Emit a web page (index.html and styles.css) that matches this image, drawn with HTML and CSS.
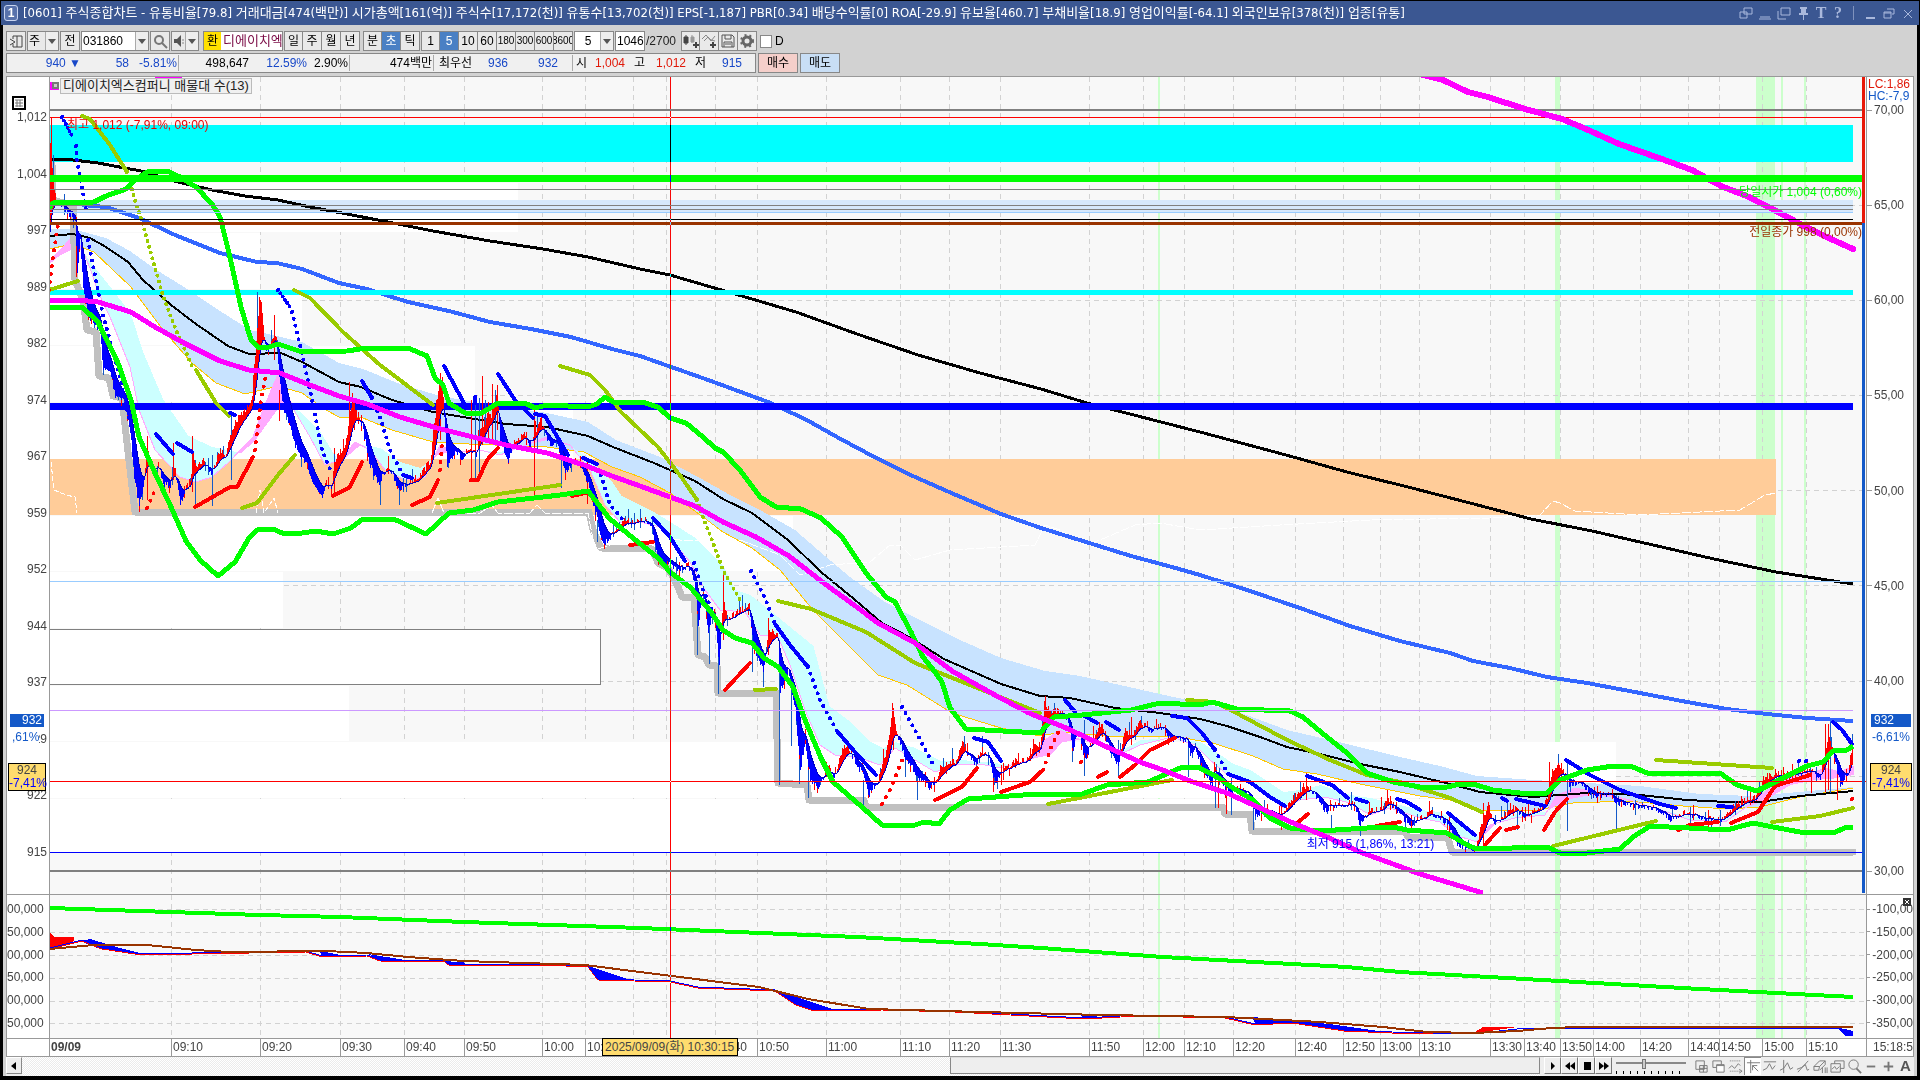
FILE: index.html
```html
<!DOCTYPE html>
<html lang="ko">
<head>
<meta charset="utf-8">
<title>[0601] 주식종합차트</title>
<link rel="stylesheet" href="styles.css">
</head>
<body>
<div class="window">
  <header class="titlebar">
    <span class="win-no">1</span>
    <h1>[0601] 주식종합차트 - 유통비율[79.8] 거래대금[474(백만)] 시가총액[161(억)] 주식수[17,172(천)] 유통수[13,702(천)] EPS[-1,187] PBR[0.34] 배당수익률[0] ROA[-29.9] 유보율[460.7] 부채비율[18.9] 영업이익률[-64.1] 외국인보유[378(천)] 업종[유통]</h1>
    <div class="win-tools">
      <button aria-label="분리"><svg width="14" height="14"><path d="M5 2h8v6h-8zM1 6h7v6h-7z"/></svg></button>
      <button aria-label="축소"><svg width="14" height="14"><path d="M2 11h10M1 13h12"/></svg></button>
      <button aria-label="복사"><svg width="14" height="14"><path d="M4 2h9v7h-9zM1 5v8h8"/></svg></button>
      <button aria-label="고정"><svg width="14" height="14"><path class="solid" d="M4 1h7v2h-1v4h2v2h-9v-2h2v-4h-1zM7 9h1v5h-1z"/></svg></button>
      <button class="glyph">T</button>
      <button class="glyph">?</button>
      <i class="bar"></i>
      <button aria-label="최소화"><svg width="14" height="14"><path class="solid" d="M3 11h9v2h-9z"/></svg></button>
      <button aria-label="이전 크기"><svg width="14" height="14"><path d="M5 3h7v5h-2M2 6h7v6h-7zM2 7h7"/></svg></button>
      <button aria-label="닫기"><svg width="14" height="14"><path d="M3 4l8 8M11 4l-8 8"/></svg></button>
    </div>
  </header>

  <div class="toolbar">
    <button class="tb w20" aria-label="목록"><svg width="15" height="15"><path d="M4 2h9v11h-9v-3M4 5v-3M1 5l5 3-5 3M8 2v11" fill="none" stroke="#444"/></svg></button>
    <button class="tb combo w32"><span>주</span><b class="arrow"></b></button>
    <button class="tb w20">전</button>
    <label class="field w68"><input value="031860" aria-label="종목코드"><b class="arrow"></b></label>
    <button class="tb w20" aria-label="검색"><svg width="15" height="15"><circle cx="6" cy="6" r="4" fill="none" stroke="#777" stroke-width="2"/><path d="M9 9l5 5" stroke="#777" stroke-width="2"/></svg></button>
    <button class="tb combo w28" aria-label="소리"><svg width="12" height="14"><path d="M1 5h3l4-4v12l-4-4h-3z" fill="#555"/><path d="M10 5v5" stroke="#888" stroke-dasharray="2 1"/></svg><b class="arrow"></b></button>
    <div class="stock"><mark>환</mark><span>디에이치엑</span></div>
    <div class="group days"><button>일</button><button>주</button><button>월</button><button>년</button></div>
    <div class="group days"><button>분</button><button class="on">초</button><button>틱</button></div>
    <div class="group nums"><button>1</button><button class="on">5</button><button>10</button><button>60</button><button class="tight">180</button><button class="tight">300</button><button class="tight">600</button><button class="tight">3600</button></div>
    <label class="field w40"><input class="mid" value="5" aria-label="간격"><b class="arrow"></b></label>
    <label class="field w30"><input value="1046" aria-label="개수"></label>
    <span class="total">/2700</span>
    <div class="group tools">
      <button aria-label="차트 추가"><svg width="16" height="16"><path d="M1 4h4v6h-4zM3 2v10" fill="#444" stroke="#444"/><path d="M8 4h3v5h-3zM9 2v8" fill="#999" stroke="#999"/><path d="M13 9v6M10 12h6" stroke="#444" stroke-width="2"/></svg></button>
      <button aria-label="지표 추가"><svg width="16" height="16"><path d="M1 6l4-4 5 6 4-5M3 8l4-4 3 3 4 1" fill="none" stroke="#888"/><path d="M12 9v6M9 12h6" stroke="#444" stroke-width="2"/></svg></button>
      <button aria-label="저장"><svg width="16" height="16"><path d="M2 2h10l2 2v10h-12zM5 2v4h6v-4M4 14v-5h8v5M5 11h6" fill="none" stroke="#555"/></svg></button>
      <button aria-label="설정"><svg width="16" height="16"><circle cx="8" cy="8" r="4" fill="none" stroke="#666" stroke-width="3"/><circle cx="8" cy="8" r="6" fill="none" stroke="#666" stroke-width="2" stroke-dasharray="2 3"/></svg></button>
    </div>
    <label class="check"><input type="checkbox">D</label>
  </div>

  <div class="inforow">
    <div class="quote">
      <span class="q74 dn">940 ▼</span><span class="q48 dn">58</span><span class="q48 dn">-5.81%</span><i></i>
      <span class="q70">498,647</span><span class="q58 dn">12.59%</span><span class="q41">2.90%</span><i></i>
      <span class="q80">474백만</span><i></i>
      <span class="q38">최우선</span><span class="q38 dn">936</span><span class="q50 dn">932</span><i class="far"></i>
      <span class="q12">시</span><span class="q40 up">1,004</span><span class="q20">고</span><span class="q41 up">1,012</span><span class="q20">저</span><span class="q36 dn">915</span>
    </div>
    <button class="buy">매수</button>
    <button class="sell">매도</button>
  </div>

  <main class="chart">
    <div class="axis price-axis">
      <span>1,012</span><span>1,004</span><span>997</span><span>989</span><span>982</span><span>974</span><span>967</span><span>959</span><span>952</span><span>944</span><span>937</span><span>929</span><span>922</span><span>915</span>
      <svg class="grid-icon" width="14" height="14"><path d="M1 1h12v12h-12z" fill="#fff" stroke="#000" stroke-width="2"/><path d="M3 4h8M3 7h8M3 10h8M5 4v7M8 4v7" stroke="#777"/></svg>
      <span class="tag now-tag">932</span><span class="tag now-pct">,61%</span>
      <span class="tag cur-tag">924<br><em>-7,41%</em></span>
    </div>
    <div class="plot">
      <svg id="price" viewBox="50 77 1816 817" preserveAspectRatio="none"></svg>
      <span class="note legend">디에이치엑스컴퍼니 매물대 수(13)</span>
      <i class="note pin"></i>
      <span class="note high">최고 1,012 (-7,91%, 09:00)</span>
      <span class="note low">최저 915 (1,86%, 13:21)</span>
      <span class="note open">당일시가 1,004 (0,60%)</span>
      <span class="note prev">전일종가 998 (0,00%)</span>
    </div>
    <div class="axis ratio-axis">
      <span>70,00</span><span>65,00</span><span>60,00</span><span>55,00</span><span>50,00</span><span>45,00</span><span>40,00</span><span class="hid"></span><span>30,00</span>
      <em class="tag lc">LC:1,86</em><em class="tag hc">HC:-7,9</em>
      <b class="tag now-tag">932</b><b class="tag now-pct">-6,61%</b>
      <b class="tag cur-tag">924<br><em>-7,41%</em></b>
    </div>
    <div class="axis vol-left"><span>00,000</span><span>50,000</span><span>00,000</span><span>50,000</span><span>00,000</span><span>50,000</span></div>
    <div class="plot2"><svg id="volume" viewBox="50 895 1816 143" preserveAspectRatio="none"></svg></div>
    <div class="axis vol-right"><span>-100,00</span><span>-150,00</span><span>-200,00</span><span>-250,00</span><span>-300,00</span><span>-350,00</span><button class="tag close" aria-label="닫기"><svg width="8" height="8"><path d="M2 2l4 4M6 2l-4 4" stroke="#fff"/></svg></button></div>
    <div class="time0"></div>
    <div class="times" id="times"></div>
    <div class="time1">15:18:5</div>
    <span class="tag cursor-time">2025/09/09(화) 10:30:15</span>
  </main>

  <footer class="bottom">
    <button class="sb" aria-label="왼쪽"><svg width="10" height="10"><path d="M7 1v8l-5-4z"/></svg></button>
    <div class="track"><div class="gap"></div><div class="thumb"></div></div>
    <div class="play">
      <button aria-label="재생"><svg width="12" height="10"><path d="M4 1v8l4-4z"/></svg></button>
      <button aria-label="뒤로"><svg width="12" height="10"><path d="M6 1v8l-5-4zM11 1v8l-5-4z"/></svg></button>
      <button aria-label="정지"><svg width="12" height="10"><path d="M3 1h7v8h-7z"/></svg></button>
      <button aria-label="앞으로"><svg width="12" height="10"><path d="M1 1v8l5-4zM6 1v8l5-4z"/></svg></button>
    </div>
    <label class="slide"><input type="range" min="0" max="10" value="4" aria-label="속도"></label>
    <div class="draw">
      <button aria-label="새 창"><svg viewBox="0 0 16 16"><path d="M2 2h9v9h-9zM6 7h8v7h-8zM10 7v7M6 10h8"/></svg></button>
      <button aria-label="겹침"><svg viewBox="0 0 16 16"><path d="M2 2h9v7h-9z"/><path d="M6 6h8v8h-8z" fill="#fff"/><path d="M6 7h8"/></svg></button>
      <button aria-label="영역"><svg viewBox="0 0 16 16"><path d="M2 2h12M2 13h12" stroke-dasharray="1 1"/><path d="M1 10l3-3 3 3 4-5 2 2M12 11l3 2-3 2"/></svg></button>
      <button class="on" aria-label="십자선"><svg viewBox="0 0 16 16"><path d="M1 4h14M5 1v14M7 7l6 6M7 12v-5h5" /></svg></button>
      <button aria-label="수평선"><svg viewBox="0 0 16 16"><path d="M2 3h13M1 12l4-2 3-5 3 6 3-4"/></svg></button>
      <button aria-label="수직선"><svg viewBox="0 0 16 16"><path d="M5 1v14M1 12l4-2 4-6 3 7 3-2"/></svg></button>
      <button aria-label="추세선"><svg viewBox="0 0 16 16"><path d="M2 14l11-12M1 11l5-2 4-3 2 6 2-1" /></svg></button>
      <button aria-label="지우개"><svg viewBox="0 0 16 16"><path d="M1 8l6-6h6l-6 6zM1 8v4h5l1-4M7 12l6-6v-4M10 9v6M13 9v6M15 9v6"/></svg></button>
      <button aria-label="여러 차트"><svg viewBox="0 0 16 16"><path d="M5 2h10v8h-10z"/><path d="M1 5h10v9h-10z" fill="#eee"/><path d="M2 11l3-3 2 3 3-3"/></svg></button>
      <button aria-label="돋보기"><svg viewBox="0 0 16 16"><circle cx="7" cy="6" r="5" fill="none"/><path d="M10 10l5 5" stroke-width="2"/></svg></button>
      <button aria-label="축소"><svg viewBox="0 0 16 16"><path d="M3 8h9" stroke-width="2"/></svg></button>
      <button aria-label="확대"><svg viewBox="0 0 16 16"><path d="M3 8h10M8 3v10" stroke-width="2"/></svg></button>
      <button class="letter">A</button>
    </div>
  </footer>
</div>
<script src="chart.js"></script>
</body>
</html>
```
FILE: styles.css
```css
* { box-sizing: border-box; }
body {
  margin: 0;
  height: 100vh;
  background: #000;
  color: #000;
  font: 12px/14px "Liberation Sans", "Noto Sans CJK KR", sans-serif;
}
button, input { font: inherit; color: inherit; padding: 0; margin: 0; }
button { display: flex; align-items: center; justify-content: center; border: 0; background: none; overflow: hidden; white-space: nowrap; }
em { font-style: normal; }

.window {
  height: 100vh;
  display: flex;
  flex-direction: column;
  background: #d2d2d2;
  border: solid #000;
  border-width: 1px 3px 4px 3px;
}

/* title bar */
.titlebar { display: flex; align-items: center; height: 24px; margin: 0 -2px; padding: 0 4px 0 3px; background: #3b5792; color: #fff; }
.win-no { width: 14px; height: 16px; line-height: 14px; border: 1px solid #c8d4f0; border-radius: 3px; text-align: center; font-weight: bold; background: #5872ac; }
.titlebar h1 { flex: 1; min-width: 0; margin: 0 0 0 5px; font: 13px/20px "DejaVu Sans Condensed", "Noto Sans CJK KR", sans-serif; white-space: pre; overflow: hidden; }
.win-tools { display: flex; align-items: center; gap: 5px; color: #a9b8dc; }
.win-tools path { fill: none; stroke: #a9b8dc; }
.win-tools path.solid { fill: #a9b8dc; stroke: none; }
.win-tools .glyph { width: 12px; font: bold 16px/18px "Liberation Serif", serif; }
.win-tools .bar { width: 1px; height: 14px; margin: 0 4px; background: #7f92bd; }

/* toolbar */
.toolbar { display: flex; align-items: center; height: 28px; padding: 4px 0 0 3px; }
.tb, .field, .group button, .stock { height: 20px; border: 1px solid #888; background: #e9e9e9; }
.toolbar > * { margin-right: 1px; }
.w20 { width: 20px; } .w28 { width: 28px; } .w30 { width: 30px; } .w32 { width: 32px; } .w40 { width: 40px; } .w68 { width: 68px; }
.combo { justify-content: space-between; padding-left: 1px; }
.arrow { width: 13px; height: 100%; flex: none; border-left: 1px solid #aaa; background: #eee; display: grid; place-items: center; }
.arrow::after { content: ""; border: solid transparent; border-width: 5px 4px 0; border-top-color: #555; }
.field { display: flex; background: #fff; }
.field input { flex: 1; min-width: 0; width: 10px; border: 0; padding-left: 1px; background: none; }
.field input.mid { text-align: center; }
.stock { display: flex; align-items: center; width: 80px; margin-left: 3px; background: #fff; color: #7a0a45; overflow: hidden; white-space: nowrap; }
.stock mark { width: 17px; height: 100%; line-height: 18px; background: #ffe000; color: #000; text-align: center; flex: none; margin-right: 2px; }
.stock span { font-size: 13px; }
.group { display: flex; }
.group button + button { border-left-width: 0; }
.days button { width: 19px; }
.group.days + .group.days { margin-left: 2px; }
.nums button { width: 19px; }
.nums .tight { font-size: 10px; }
.tools button { width: 19px; }
.group .on { background: #4a80c4; color: #fff; }
.total { width: 34px; color: #222; }
.check { display: flex; align-items: center; gap: 3px; margin-left: 2px; }
.check input { appearance: none; width: 12px; height: 13px; border: 1px solid #888; background: #fff; }

/* quote row */
.inforow { display: flex; height: 20px; padding-left: 3px; gap: 2px; }
.quote { display: flex; align-items: center; width: 750px; border: 1px solid #888; background: #f0f0f0; }
.quote span { text-align: right; white-space: nowrap; }
.quote i { width: 1px; height: 16px; margin: 0 2px 0 1px; background: #aaa; }
.quote i.far { margin-left: 14px; }
.q12 { width: 12px; } .q20 { width: 20px; } .q36 { width: 36px; } .q38 { width: 36px; } .q40 { width: 38px; } .q41 { width: 41px; }
.q48 { width: 48px; } .q50 { width: 50px; } .q58 { width: 58px; } .q70 { width: 68px; } .q74 { width: 74px; } .q80 { width: 80px; }
.dn { color: #1848c8; } .up { color: #e01808; }
.buy, .sell { width: 40px; height: 20px; border: 1px solid #888; }
.buy { background: #f5cfca; } .sell { background: #c8def5; }

/* chart */
.chart {
  flex: 1;
  min-height: 0;
  position: relative;
  display: grid;
  grid-template-columns: 42px 1fr 47px;
  grid-template-rows: minmax(0, 818fr) minmax(0, 144fr) 17px;
  margin: 3px 3px 0;
  border: 1px solid #999;
  background: #fff;
}
.plot, .plot2 { position: relative; min-width: 0; min-height: 0; background: #f8f8f8; border-left: 1px solid #999; border-bottom: 1px solid #999; }
.plot svg, .plot2 svg { display: block; width: 100%; height: 100%; shape-rendering: crispEdges; }
.cursor { mix-blend-mode: difference; }
.axis { position: relative; display: flex; flex-direction: column; justify-content: space-between; min-height: 0; color: #444; border-bottom: 1px solid #999; overflow: hidden; }
.price-axis { text-align: right; padding: 33px 2px 35px 0; }
.ratio-axis, .vol-right { border-left: 1px solid #999; }
.ratio-axis { padding: 26px 0 16px; }
.ratio-axis > span, .vol-right > span { display: flex; align-items: center; gap: 2px; height: 14px; }
.ratio-axis > span::before, .vol-right > span::before { content: ""; width: 5px; height: 1px; background: #999; }
.ratio-axis > .hid::before { visibility: hidden; }
.vol-left { text-align: right; padding: 7px 6px 8px 0; }
.vol-right { padding: 7px 0 8px; }
.vol-left span, .vol-right span { white-space: nowrap; }
.tag { position: absolute; white-space: nowrap; font-weight: normal; }
.grid-icon { position: absolute; left: 5px; top: 19px; }
.now-tag { top: 78%; left: 3px; width: 34px; height: 13px; line-height: 13px; padding-right: 2px; background: #1459c8; color: #fff; }
.ratio-axis .now-tag { left: 4px; width: 40px; padding-left: 3px; }
.now-pct { top: 80%; left: 5px; line-height: 12px; background: #fff; color: #1459c8; }
.cur-tag { top: 84%; left: 1px; width: 38px; height: 28px; line-height: 13px; border: 1px solid #000; background: #ffdc6e; text-align: center; color: #444; }
.ratio-axis .cur-tag { left: 3px; width: 42px; }
.cur-tag em { color: #00f; }
.lc { top: 0; left: 1px; color: #e01808; }
.hc { top: 12px; left: 1px; color: #1459c8; }
.close { top: 3px; right: 2px; width: 8px; height: 8px; background: #333; }
.note { position: absolute; white-space: nowrap; }
.legend { left: 10px; top: 1px; padding: 0 2px; border: 1px solid #bbb; background: #f0f0f0; font-size: 13px; color: #222; }
.pin { left: 2px; top: 5px; width: 7px; height: 7px; border: 2px solid #777; background: #ccc; }
.high { left: 17px; top: 41px; color: #e00; }
.low { left: 69.2%; top: 93%; color: #00f; }
.open { right: 4px; top: 108px; color: #0f0; }
.prev { right: 4px; top: 148px; color: #930; }
.time0, .times, .time1 { background: #fff; color: #444; line-height: 17px; white-space: nowrap; overflow: hidden; }
.times { display: grid; border-left: 1px solid #999; }
.times span { padding-left: 1px; }
.times span + span { border-left: 1px solid #999; }
.times span:first-child { font-weight: bold; }
.time1 { border-left: 1px solid #999; padding-left: 6px; }
.cursor-time { left: 31.2%; bottom: 0; width: 136px; height: 18px; line-height: 16px; border: 1px solid #000; background: #ffdc6e; color: #444; text-align: center; }

/* bottom bar */
.bottom { display: flex; height: 19px; margin: 0 3px; background: #eee; }
.sb { width: 16px; height: 17px; border: 1px solid #888; border-top-color: #fff; border-left-color: #fff; }
.track { flex: 1; display: flex; background: repeating-conic-gradient(#fff 0 25%, #ebebeb 0 50%) 0 0 / 2px 2px; }
.gap { flex: 930; }
.thumb { flex: 589; height: 17px; background: #eee; border: 1px solid #888; border-top-color: #ddd; }
.play { display: flex; padding-left: 4px; }
.play button { width: 17px; height: 17px; border: 1px solid #777; border-top-color: #fff; border-left-color: #fff; }
.slide { width: 78px; padding: 2px 4px 0; }
.slide::after { content: ""; display: block; height: 3px; margin-top: 2px; background: repeating-linear-gradient(90deg, #000 0 1px, transparent 1px 7px); }
.slide input { appearance: none; display: block; width: 100%; height: 10px; background: linear-gradient(#888, #888) 0 3px / 100% 2px no-repeat; }
.slide input::-webkit-slider-thumb { appearance: none; width: 4px; height: 10px; background: #ccc; border: 1px solid #777; }
.draw { display: flex; padding-left: 3px; }
.draw button { width: 17px; height: 18px; }
.draw .on { background: #fff; border: 1px solid #888; border-width: 1px 0 0 1px; }
.draw svg { width: 15px; height: 15px; fill: none; stroke: #777; flex: none; }
.letter { font: bold 15px/16px "Liberation Sans", sans-serif; color: #555; }
```
FILE: chart.js
```js
const pts = s => s.trim().split(/\s+/).map(p => p.split(',').map(Number));
const str = a => a.map(p => p.join(',')).join(' ');
const line = (s, color, w, extra = '') => `<polyline points="${s}" fill="none" stroke="${color}" stroke-width="${w}" stroke-linejoin="round" ${extra}/>`;
const poly = (s, color) => `<polygon points="${s}" fill="${color}"/>`;
const rect = (x, y, w, h, color, extra = '') => `<rect x="${x}" y="${y}" width="${w}" height="${h}" fill="${color}" ${extra}/>`;

// value of a polyline at every whole x
function sample(a) {
  const out = [];
  let i = 0;
  for (let x = a[0][0]; x <= a[a.length - 1][0]; x++) {
    while (i < a.length - 2 && a[i + 1][0] < x) i++;
    const [x0, y0] = a[i], [x1, y1] = a[i + 1];
    out.push([x, y0 + (y1 - y0) * (x - x0) / (x1 - x0 || 1)]);
  }
  return out;
}

// area between two sampled lines: one colour when the first is on top, another when it is below
function between(a, b, above, below) {
  let up = '', down = '';
  for (let i = 0; i < Math.min(a.length, b.length); i++) {
    const y0 = Math.round(Math.min(a[i][1], b[i][1])), y1 = Math.round(Math.max(a[i][1], b[i][1]));
    if (y1 <= y0) continue;
    const d = `M${a[i][0]} ${y0}h1V${y1}h-1z`;
    if (a[i][1] < b[i][1]) up += d; else down += d;
  }
  return `<path d="${up}" fill="${above}"/><path d="${down}" fill="${below}"/>`;
}

const ticks = [171, 260, 340, 404, 464, 542, 585, 633, 666, 715, 757, 826, 900, 949, 1000, 1089, 1143, 1184, 1233, 1295, 1343, 1380, 1419, 1490, 1524, 1560, 1593, 1640, 1688, 1719, 1762, 1806];
const names = ['09/09', '09:10', '09:20', '09:30', '09:40', '09:50', '10:00', '10:', '', '', '10:40', '10:50', '11:00', '11:10', '11:20', '11:30', '11:50', '12:00', '12:10', '12:20', '12:40', '12:50', '13:00', '13:10', '13:30', '13:40', '13:50', '14:00', '14:20', '14:40', '14:50', '15:00', '15:10'];
const edges = [50, ...ticks, 1866];
const times = document.getElementById('times');
times.style.gridTemplateColumns = edges.slice(1).map((e, i) => `minmax(0,${e - edges[i]}fr)`).join(' ');
times.innerHTML = names.map(n => `<span>${n}</span>`).join('');

const greens = [[1158, 2], [1555, 5], [1756, 19], [1781, 2], [1804, 2]];
const grid = (y0, y1, rows) =>
  greens.map(g => rect(g[0], y0, g[1], y1 - y0, '#ccffcc')).join('') +
  ticks.map(x => line(`${x + .5},${y0} ${x + .5},${y1}`, '#d2d2d2', 1, 'stroke-dasharray="5 4"')).join('') +
  rows.map(y => line(`50,${y + .5} 1866,${y + .5}`, '#d2d2d2', 1, 'stroke-dasharray="5 4"')).join('');

const upperLime = '49,208 53,203 94,202 106,196 126,189 135,180 147,172 167,171 180,177 196,187 212,204 220,217 229,253 241,307 251,340 259,348 269,347 278,344 302,352 347,351 367,348 408,348 427,356 435,378 443,385 449,403 465,413 482,413 498,403 527,404 535,408 547,405 588,407 597,404 605,397 613,402 642,402 658,407 670,418 686,423 703,437 715,448 723,452 740,470 760,497 776,507 801,509 821,518 842,537 866,573 886,597 895,602 911,632 923,657 935,672 942,682 950,708 966,729 1040,733 1054,717 1082,715 1131,710 1160,703 1200,705 1212,702 1237,709 1290,711 1303,717 1327,737 1347,753 1367,773 1393,782 1420,787 1447,787 1460,784 1473,784 1493,790 1520,793 1547,793 1560,780 1587,770 1613,766 1633,767 1647,773 1720,773 1737,785 1757,791 1773,783 1793,773 1807,766 1823,762 1833,751 1847,750 1853,746';
const lowerLime = '49,307 82,307 98,322 118,363 131,400 139,437 155,473 171,507 186,541 200,560 218,576 235,562 249,538 257,530 273,529 282,533 302,533 316,531 333,534 351,528 363,519 396,520 426,534 437,524 449,513 473,510 498,502 543,497 560,495 588,491 609,518 633,538 658,558 670,572 690,587 711,612 723,630 735,638 752,643 764,658 778,667 793,687 805,720 821,758 833,782 862,807 882,825 915,825 924,822 939,824 950,810 968,799 1037,794 1082,794 1107,785 1148,782 1180,768 1198,767 1217,777 1233,788 1253,800 1270,818 1290,828 1320,831 1367,828 1393,827 1407,830 1447,833 1467,845 1477,849 1547,847 1560,853 1587,853 1620,849 1633,837 1650,826 1727,830 1753,823 1773,827 1800,832 1833,833 1847,827 1853,827';
const longMa = '49,159 73,160 98,163 141,171 178,182 212,190 245,196 278,200 310,207 347,214 388,222 433,231 490,241 543,249 588,257 640,269 670,275 735,294 796,312 857,334 918,355 980,373 1041,389 1087,403 1200,432 1286,455 1347,472 1408,487 1470,503 1531,519 1592,531 1653,545 1714,559 1776,572 1853,584';
const blueMa = '82,205 106,207 139,218 175,235 220,253 257,262 277,263 302,269 339,283 367,289 408,302 449,311 490,322 531,329 571,337 612,349 640,356 711,381 768,402 805,419 837,437 878,459 915,477 956,495 1001,514 1041,528 1086,542 1131,556 1172,567 1200,575 1250,591 1300,608 1350,626 1400,641 1425,647 1450,653 1473,661 1510,668 1547,677 1587,683 1640,693 1687,702 1727,709 1767,714 1807,718 1853,721';
const magenta = '49,300 78,300 98,302 131,312 155,327 184,343 220,361 249,370 280,373 302,382 339,396 367,404 400,417 437,428 473,437 506,445 547,453 584,465 612,476 640,486 670,497 695,506 723,522 756,537 789,556 825,584 854,605 878,623 915,643 952,671 993,694 1029,713 1066,728 1107,747 1140,762 1160,769 1193,782 1227,793 1260,808 1293,823 1327,837 1360,852 1393,864 1420,874 1450,883 1483,893';
const magenta2 = '1423,75 1443,80 1468,92 1488,97 1525,109 1562,119 1586,129 1619,144 1659,158 1692,170 1721,186 1749,197 1778,212 1806,227 1831,239 1853,249';
const midMa = '49,236 73,234 90,238 106,247 128,262 143,280 171,305 196,324 228,346 249,354 281,353 302,362 339,382 361,387 392,400 433,412 469,418 506,424 547,427 588,436 613,447 654,463 695,481 723,499 752,513 788,540 821,572 854,599 882,623 911,638 944,659 1001,684 1040,696 1070,698 1115,708 1160,713 1200,719 1227,726 1260,737 1287,747 1320,754 1360,764 1400,772 1450,784 1480,792 1533,797 1587,793 1640,795 1687,800 1727,802 1760,802 1800,796 1853,791';
const bandTop = '49,229 73,229 106,238 130,251 155,269 184,287 220,311 250,330 281,337 302,342 339,363 363,369 400,384 440,396 480,403 520,409 547,413 588,422 616,440 660,457 700,478 730,495 760,510 795,530 825,556 850,577 885,602 920,620 960,640 1001,658 1045,671 1080,676 1120,685 1160,694 1233,710 1287,730 1343,743 1400,757 1440,766 1477,776 1533,780 1587,783 1640,786 1700,794 1750,796 1787,793 1853,787';
const bandLow = '49,249 73,244 94,252 131,287 163,330 192,363 216,383 245,394 278,386 302,393 326,410 339,417 363,418 392,430 433,442 469,444 547,447 584,452 612,467 640,477 670,493 703,517 723,532 752,548 780,570 813,610 846,643 878,675 907,685 952,713 1001,728 1040,736 1062,732 1119,737 1172,736 1213,743 1253,756 1283,769 1317,774 1360,784 1420,796 1450,800 1477,810 1533,811 1573,803 1627,801 1683,806 1727,809 1760,807 1800,797 1853,788';
const cloudA = pts('49,264 60,255 73,249 82,250 90,262 106,282 130,313 143,353 163,400 188,436 212,447 241,453 255,440 278,408 285,402 300,412 320,432 339,463 360,445 380,448 400,462 420,468 437,455 450,452 475,450 500,452 520,446 547,440 570,446 590,460 612,482 621,496 650,510 670,522 695,538 723,566 735,590 750,595 775,615 813,646 829,706 850,722 870,742 883,748 895,742 915,748 940,761 960,760 985,762 1010,765 1035,758 1050,755 1062,742 1080,740 1100,745 1119,752 1140,740 1172,738 1200,742 1213,750 1233,764 1250,770 1283,792 1300,790 1320,785 1350,795 1370,798 1400,805 1420,810 1440,812 1460,825 1480,838 1500,820 1520,812 1545,812 1565,800 1590,795 1610,797 1640,803 1670,812 1690,817 1720,818 1745,808 1765,800 1790,785 1815,780 1840,778 1853,775');
const cloudB = pts('49,262 62,248 73,236 80,245 90,268 98,292 110,317 130,367 139,410 155,450 180,477 196,482 212,477 228,463 253,437 262,412 278,374 284,385 295,412 310,437 325,465 340,460 355,442 370,450 385,470 405,480 425,477 440,445 455,452 480,450 500,455 520,447 547,437 570,445 590,470 605,505 620,522 640,522 660,527 680,550 690,562 705,590 720,610 745,612 760,635 778,637 790,665 805,710 820,745 835,755 860,758 880,765 895,748 915,760 935,772 960,764 985,765 1000,768 1030,760 1045,740 1060,730 1075,738 1100,745 1119,755 1140,745 1172,737 1195,745 1210,760 1230,777 1255,785 1283,808 1300,800 1325,797 1350,803 1370,815 1390,808 1420,818 1440,822 1455,835 1477,842 1490,825 1515,818 1545,815 1557,795 1575,788 1600,793 1630,800 1670,813 1690,820 1725,822 1745,808 1765,792 1785,776 1815,772 1825,768 1840,772 1853,766');
const price = pts('49,250 50,140 52,170 54,190 57,202 62,205 66,212 70,215 75,220 77,270 80,240 83,290 88,315 95,326 100,330 103,370 110,372 115,395 123,398 130,430 134,480 139,505 143,490 147,440 150,470 155,475 158,462 163,485 170,485 174,465 180,505 185,490 190,480 193,455 197,465 203,460 212,475 218,450 225,455 232,430 240,415 246,410 252,395 256,340 259,300 261,305 264,340 268,355 273,335 276,335 279,380 284,410 292,435 300,460 306,460 313,485 322,495 326,480 331,490 334,460 345,445 352,400 357,415 362,425 368,460 378,485 388,465 398,490 410,482 420,475 430,460 436,410 440,375 443,400 447,465 455,450 462,460 470,450 476,455 480,430 486,420 492,415 497,392 500,440 508,460 515,440 525,435 530,445 540,420 550,445 558,445 565,475 575,460 583,470 590,490 597,520 603,545 612,535 622,520 635,522 645,520 652,530 658,560 668,565 678,570 688,565 694,580 698,625 703,590 708,630 714,610 719,665 723,600 728,620 740,610 749,605 753,650 763,670 768,635 772,630 778,635 780,690 788,670 795,710 800,770 805,740 810,780 818,790 828,765 833,780 842,750 848,748 855,762 863,775 868,795 878,780 885,755 893,710 897,735 905,760 917,775 930,790 940,770 950,762 957,762 962,740 968,755 975,765 982,750 990,760 995,785 1003,770 1015,762 1027,760 1035,745 1040,745 1044,705 1050,712 1060,710 1067,720 1073,750 1078,730 1085,760 1092,740 1100,725 1110,750 1118,765 1124,730 1133,735 1140,722 1150,730 1160,725 1170,738 1187,740 1190,755 1195,750 1205,775 1212,785 1214,765 1220,780 1227,790 1240,790 1250,795 1255,815 1265,810 1280,818 1290,800 1300,792 1307,785 1315,795 1325,810 1335,805 1345,808 1352,800 1360,825 1370,810 1380,810 1388,800 1400,815 1410,825 1420,817 1430,812 1447,822 1457,845 1475,852 1480,830 1488,805 1495,825 1505,815 1512,808 1525,815 1540,810 1546,800 1552,775 1558,765 1563,772 1569,785 1580,782 1593,795 1610,795 1617,803 1635,805 1655,808 1670,820 1683,812 1690,815 1705,818 1720,820 1735,805 1755,797 1762,780 1775,772 1790,775 1810,770 1820,778 1826,745 1829,735 1833,755 1840,785 1848,772 1852,745');

let seed = 7;
const rnd = () => (seed = (seed * 16807) % 2147483647) / 2147483647;
const close = sample(price).map(([x, y]) => [x, Math.min(851, y + (rnd() - .5) * 7)]);
let avg = 245;
const signal = close.map(([x, y]) => [x, avg += (y - avg) * .13]);

// x, top, bottom, 0 = rise / 1 = fall
const wicks = [[51, 118, 178, 0], [53, 155, 195, 1], [76, 217, 277, 0], [64, 194, 215, 1], [257, 292, 345, 1], [274, 315, 360, 0], [147, 436, 500, 0], [173, 443, 480, 0], [192, 436, 492, 0], [195, 460, 507, 1], [212, 455, 506, 1], [231, 415, 480, 1], [279, 390, 421, 0], [349, 382, 440, 0], [354, 398, 430, 0], [334, 448, 497, 0], [380, 470, 505, 1], [399, 480, 505, 1], [440, 373, 440, 0], [471, 400, 482, 0], [475, 405, 481, 1], [479, 398, 481, 1], [482, 376, 445, 0], [485, 400, 443, 1], [488, 402, 443, 0], [492, 384, 442, 0], [495, 390, 442, 1], [497, 385, 430, 0], [534, 410, 495, 0], [537, 417, 450, 1], [561, 450, 488, 1], [587, 458, 504, 0], [597, 520, 542, 1], [697, 580, 655, 1], [709, 620, 664, 1], [718, 650, 694, 1], [723, 573, 640, 0], [752, 620, 672, 1], [763, 650, 687, 1], [768, 618, 655, 0], [779, 640, 785, 1], [791, 690, 746, 1], [799, 740, 784, 1], [808, 755, 798, 1], [863, 780, 807, 1], [893, 708, 750, 0], [905, 755, 777, 1], [917, 770, 800, 1], [1001, 765, 785, 0], [993, 765, 792, 0], [1044, 701, 740, 0], [1072, 730, 762, 1], [1084, 720, 776, 1], [1118, 740, 777, 1], [1131, 717, 745, 0], [1188, 740, 777, 1], [1215, 777, 808, 1], [1218, 775, 808, 0], [1226, 783, 814, 0], [1231, 778, 815, 1], [1253, 800, 830, 1], [1281, 805, 830, 0], [1306, 773, 800, 0], [1331, 815, 830, 1], [1411, 815, 830, 0], [1449, 815, 838, 0], [1483, 803, 845, 0], [1517, 810, 830, 1], [1549, 762, 800, 0], [1567, 760, 831, 1], [1616, 795, 831, 1], [1635, 800, 815, 1], [1811, 770, 793, 0], [1825, 724, 792, 0], [1828, 724, 790, 0], [1830, 722, 793, 1], [1837, 770, 800, 0], [1840, 765, 787, 1]];
for (let i = 0; i < close.length; i += 3) {
  const [x, y] = close[i];
  if (rnd() > .45) wicks.push([x, y - rnd() * 12, Math.min(852, y + rnd() * 8), rnd() > .6 ? 1 : 0]);
}
const sar = (list, color, dash) => list.split('|').map(s => line(s, color, 4, `stroke-linecap="round"${dash ? ` stroke-dasharray="${dash}"` : ''}`)).join('');

const white = [[183, 49, 469], [233, 56, 211], [290, 55, 253], [346, 56, 426], [403, 56, 524], [516, 55, 744], [572, 56, 234], [686, 55, 300], [742, 56, 1567], [799, 54, 1453]];
const hline = (y, color, w, x2) => rect(49, y, x2 - 49, w, color);

document.getElementById('price').innerHTML =
  grid(77, 894, [205, 300, 395, 490, 585, 681, 776]) +
  white.map(([y, h, w]) => rect(49, y, w, h, '#fff')).join('') +
  rect(48, 629, 552, 55, '#fff', 'stroke="#808080"') +
  rect(49, 125, 1804, 37, '#00ffff') + rect(49, 459, 1727, 56, '#ffcc99') +
  rect(49, 200, 1804, 12, '#d6e8fc') +
  poly(bandTop + ' ' + str(pts(bandLow).reverse()), '#c8e3ff') + line(bandLow, '#ffc800', 1) +
  between(sample(cloudA), sample(cloudB), '#ccffff', '#ffaaff') + line(str(cloudB), '#ffaaff', 1) +
  line('52,165 53,200 73,206 75,280 83,300 87,330 96,332 99,376 109,378 113,396 122,398 127,443 135,512 589,512 593,530 601,548 652,549 658,563 668,568 678,587 682,597 694,598 698,655 705,657 709,665 717,666 718,693 776,693 778,783 807,785 809,800 864,800 866,807 1223,807 1225,814 1250,814 1252,831 1405,831 1408,837 1448,838 1452,852 1853,852', '#c0c0c0', 7, 'stroke-linecap="round"') +
  line('51,462 54,490 66,495 75,497 77,513', '#fff', 1, 'stroke-dasharray="5 2"') +
  line('256,513 260,490 264,513 274,498 278,513', '#fff', 1, 'stroke-dasharray="5 2"') +
  line('432,513 438,498 444,513 480,513 492,505 498,513 530,513 537,505 545,513 588,513 595,550 640,535 680,540 740,540 780,555 800,575 830,565 870,562 890,545 900,545 915,560 950,550 1035,545 1045,525 1060,530 1085,545 1100,540 1135,525 1160,523 1200,530 1280,525 1370,520 1490,518 1540,515 1553,501 1560,503 1575,511 1640,515 1740,510 1765,495 1776,493', '#fff', 1, 'stroke-dasharray="9 2"') +
  hline(109, '#808080', 2, 1863) + hline(117, '#ff0000', 1, 1863) +
  line(longMa, '#000', 3) + line(blueMa, '#3366ff', 4) + line(midMa, '#000', 2) +
  hline(403, '#0000ff', 7, 1853) + hline(290, '#00ffff', 5, 1853) +
  wicks.map(([x, a, b, c]) => rect(x, Math.round(a), 1, Math.max(1, Math.round(b - a)), c ? '#1459c8' : '#ff0000')).join('') +
  between(close, signal, '#ff0000', '#0000ff') + line(str(signal), '#0000c8', 1) +
  sar('49,290 78,281|82,116 90,119 110,145 127,172|196,370 216,403 229,416|242,508 257,503 278,475 295,455|294,290 310,298 343,332 380,365 433,405|437,503 560,485|560,366 590,375 605,390 621,412 658,447 682,478 697,500|755,690 776,689|778,601 811,609 866,632 915,663 1040,713|1048,804 1172,780|1187,700 1215,702 1240,715 1287,740 1330,760 1367,775 1400,782 1450,798 1482,812|1553,846 1656,821|1656,760 1772,768|1772,822 1820,816 1853,808', '#99cc00') +
  sar('127,172 135,200 141,218 150,250 163,296 176,330 192,366|697,500 703,517 713,543 723,570 740,600', '#99cc00', '0 6') +
  sar('156,434 173,454|177,443 192,452|230,413 235,415|362,381 372,398|403,475 412,478|444,366 465,405|475,397 475,403|498,374 515,400 533,418|535,414 545,416 568,455|583,458 597,464|653,518 670,537 685,561|775,624 790,645 808,667|837,731 855,752 876,775|974,738 988,742 1001,761|1065,700 1075,712|1083,715 1097,723|1106,722 1119,730|1172,716 1187,718 1202,733 1215,750|1228,774 1250,782 1270,797 1285,806|1307,776 1332,785 1348,798|1356,799 1367,802|1397,799 1407,802 1420,810|1448,813 1475,835|1502,798 1507,801|1516,799 1545,806|1566,760 1590,775 1620,790 1660,804 1676,808|1718,806 1732,807|1833,722 1842,730 1852,744', '#0000ff') +
  sar('62,117 73,138|278,290 290,307', '#0000ff', '0 4') +
  sar('76,146 77,160 82,188 86,210|88,240 95,275 103,315 118,370 132,430|292,312 300,345 310,390 322,450 332,474|372,398 381,420 390,450 403,475|601,475 610,505 625,522|694,563 703,590 713,612|751,571 765,598 775,624|808,667 820,700 837,731|902,707 915,730 935,768|1215,750 1228,774|1799,761 1813,761', '#0000ff', '0 7') +
  sar('195,507 230,487 237,487 253,457|333,496 350,487 362,462|412,505 430,497 438,480|471,480 478,480 487,460 498,448|572,496 590,492|630,545 653,542|725,690 750,663|935,800 962,787 977,768|1001,792 1030,782 1043,770|1098,777 1107,772|1120,777 1135,765 1150,750 1175,738|1296,824 1308,814|1376,826 1400,822|1485,845 1500,828|1506,830 1518,827|1544,830 1555,812 1567,799|1678,830 1690,825 1718,822|1731,823 1758,812 1775,786 1810,775|1852,799 1852,799', '#ff0000') +
  sar('49,290 53,257 58,225|147,508 155,490|255,450 261,400 268,365|440,470 442,445|882,804 890,790 903,758|1043,770 1052,745 1062,725|1081,762 1082,758', '#ff0000', '0 8') +
  line(upperLime, '#00ff00', 5) + line(lowerLime, '#00ff00', 5) +
  line(magenta, '#ff00ff', 5) + line(magenta2, '#ff00ff', 6, 'stroke-linecap="round"') +
  rect(50, 82, 9, 8, '#ff00ff') + rect(72, 92, 57, 2, '#ff00ff') + rect(155, 77, 27, 1, '#ff00ff') +
  hline(175, '#00ff00', 7, 1863) + hline(189, '#808080', 1, 1853) + hline(205, '#808080', 1, 1853) + hline(209, '#808080', 1, 1853) +
  hline(212, '#99ccff', 1, 1853) + hline(219, '#000', 1, 1853) + hline(222, '#993300', 3, 1863) +
  hline(581, '#99ccff', 1, 1863) + hline(710, '#cc99ff', 1, 1853) + hline(781, '#ff0000', 1, 1866) + hline(852, '#0000ff', 1, 1863) + hline(870, '#808080', 2, 1863) +
  rect(1862, 77, 3, 146, '#e81808') + rect(1862, 223, 3, 670, '#1459c8') +
  rect(670, 77, 1, 817, '#00ffff', 'class="cursor"');

document.getElementById('volume').innerHTML =
  grid(895, 1038, [909, 932, 955, 978, 1001, 1023]) +
  line('50,908 260,915 340,917 464,922 640,928 857,937 980,944 1041,948 1163,957 1347,967 1400,972 1560,981 1700,989 1853,997', '#00ff00', 4) +
  ['80,941 90,939 120,948 140,953 100,949', '320,951 322,957 340,955', '368,954 380,961 405,960', '445,961 450,965 470,963', '589,966 598,980 630,980', '776,990 796,1005 812,1010 832,1009', '1080,1014 1084,1019 1100,1017', '1252,1017 1256,1025 1290,1022 1344,1031 1385,1032 1330,1024', '1836,1027 1846,1036 1853,1036 1853,1031'].map(s => poly(s, '#0000ff')).join('') +
  poly('50,933 55,937 74,937 74,941 60,946 50,950', '#ff0000') + poly('1475,1033 1483,1027 1517,1027', '#ff0000') +
  line('50,949 82,941 102,949 135,954 192,954 306,952 322,957 367,956 380,961 445,962 449,965 543,965 588,967 598,980 670,982 698,988 775,991 796,1005 814,1011 882,1010 955,1012 1084,1019 1139,1016 1225,1018 1255,1025 1292,1023 1344,1031 1392,1033 1472,1034 1483,1028', '#ff0000', 1) +
  line('50,948 82,940 102,948 135,953 192,953 306,951 322,956 367,955 380,960 445,961 449,964 543,964 588,966 598,979 670,981 698,987 775,990 796,1004 814,1010 882,1009 955,1011 1084,1018 1139,1015 1225,1017 1255,1024 1292,1022 1344,1030 1392,1032 1472,1034 1517,1029 1840,1028', '#0000ff', 1) +
  line('49,949 94,945 147,945 196,950 229,952 326,951 367,953 408,957 464,961 585,965 640,972 759,987 808,999 869,1009 980,1012 1102,1015 1225,1017 1320,1022 1383,1027 1427,1032 1474,1033 1517,1031 1552,1028 1578,1027 1613,1027 1853,1027', '#993300', 2) +
  rect(670, 895, 1, 143, '#00ffff', 'class="cursor"');
```
